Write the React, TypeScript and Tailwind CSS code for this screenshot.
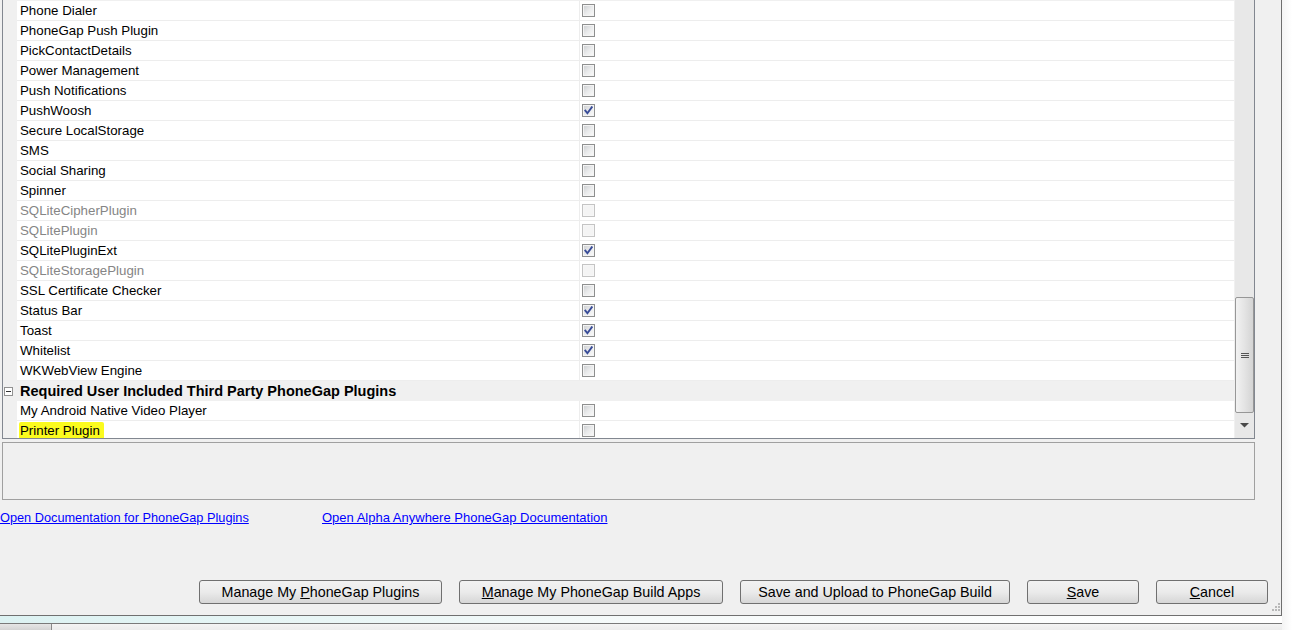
import React from "react";

type Row = { name: string; state: 0 | 1 | 2 };

const rows: Row[] = [
  { name: "Phone Dialer", state: 0 },
  { name: "PhoneGap Push Plugin", state: 0 },
  { name: "PickContactDetails", state: 0 },
  { name: "Power Management", state: 0 },
  { name: "Push Notifications", state: 0 },
  { name: "PushWoosh", state: 1 },
  { name: "Secure LocalStorage", state: 0 },
  { name: "SMS", state: 0 },
  { name: "Social Sharing", state: 0 },
  { name: "Spinner", state: 0 },
  { name: "SQLiteCipherPlugin", state: 2 },
  { name: "SQLitePlugin", state: 2 },
  { name: "SQLitePluginExt", state: 1 },
  { name: "SQLiteStoragePlugin", state: 2 },
  { name: "SSL Certificate Checker", state: 0 },
  { name: "Status Bar", state: 1 },
  { name: "Toast", state: 1 },
  { name: "Whitelist", state: 1 },
  { name: "WKWebView Engine", state: 0 },
];

function CheckBox({ state }: { state: 0 | 1 | 2 }) {
  if (state === 2) {
    return (
      <div className="w-[13px] h-[13px] border border-[#c4c4c4] bg-[#f7f7f7] p-[1px]">
        <div className="w-full h-full bg-[#f4f4f4]" />
      </div>
    );
  }
  return (
    <div className="w-[13px] h-[13px] border border-[#8e8f8f] bg-[#f4f4f4] p-[1px] relative">
      <div className="w-full h-full bg-gradient-to-br from-[#cfd1d3] via-[#e9eaeb] to-[#f8f8f8]" />
      {state === 1 && (
        <svg className="absolute left-[1px] top-[1px]" width="9" height="9" viewBox="0 0 9 9">
          <path d="M1.3 4.6 L3.4 7.2 L7.8 1.2" fill="none" stroke="#394c98" strokeWidth="1.9" strokeLinecap="square" />
        </svg>
      )}
    </div>
  );
}

function DataRow({ row }: { row: Row }) {
  return (
    <div className="flex h-[20px] shrink-0">
      <div className="w-[14px] bg-[#f0f0f0]" />
      <div className="flex flex-1 bg-white border-b border-[#ededed]">
        <div
          className={
            "w-[563px] border-r border-[#ededed] pl-[3px] leading-[19px] text-[13.3px] " +
            (row.state === 2 ? "text-[#858585]" : "text-black")
          }
        >
          {row.name}
        </div>
        <div className="pl-[2px] flex items-center">
          <CheckBox state={row.state} />
        </div>
      </div>
    </div>
  );
}

function Btn({ w, children }: { w: number; children: React.ReactNode }) {
  return (
    <div
      style={{ width: w }}
      className="shrink-0 h-[24px] rounded-[3px] border border-[#707070] bg-gradient-to-b from-[#f2f2f2] via-[#ebebeb] to-[#d6d6d6] flex items-center justify-center text-[14.3px] text-black leading-none"
    >
      {children}
    </div>
  );
}

export default function App() {
  return (
    <div className="w-[1292px] h-[630px] bg-[#f0f0f0] overflow-hidden font-['Liberation_Sans',Arial,sans-serif] flex flex-col">
      <div className="flex h-[615px]">
        <div className="w-[1281px] flex flex-col relative">
          {/* grid */}
          <div className="ml-[2px] w-[1253px] h-[439px] border-l border-r border-b border-[#828790] flex overflow-hidden">
            <div className="w-[1231px] flex flex-col pt-[1px] overflow-hidden">
              {rows.map((r) => (
                <DataRow key={r.name} row={r} />
              ))}
              <div className="flex h-[20px] bg-[#f0f0f0] items-center shrink-0">
                <div className="w-[14px] flex items-center">
                  <div className="ml-[1px] w-[9px] h-[9px] border border-[#919191] bg-white flex items-center justify-center">
                    <div className="w-[5px] h-[1px] bg-[#333]" />
                  </div>
                </div>
                <div className="pl-[3px] text-[14.5px] font-bold text-black leading-[19px]">
                  Required User Included Third Party PhoneGap Plugins
                </div>
              </div>
              <DataRow row={{ name: "My Android Native Video Player", state: 0 }} />
              <div className="flex h-[20px] shrink-0">
                <div className="w-[14px] bg-[#f0f0f0]" />
                <div className="flex flex-1 bg-white border-b border-[#ededed]">
                  <div className="w-[563px] border-r border-[#ededed] pl-[2px] text-[13.3px] text-black flex items-center">
                    <span className="bg-[#fbfb1e] pl-[1px] pr-[4px] leading-[18px] rounded-[2px]">Printer Plugin</span>
                  </div>
                  <div className="pl-[2px] flex items-center">
                    <CheckBox state={0} />
                  </div>
                </div>
              </div>
            </div>
            {/* scrollbar */}
            <div className="w-[20px] bg-[#e8e8e8] border-l border-[#f0f0f0] flex flex-col">
              <div className="h-[297px] shrink-0" />
              <div className="h-[116px] shrink-0 w-[19px] rounded-[2px] border border-[#979797] bg-gradient-to-r from-[#f2f2f2] via-[#e4e4e4] to-[#d4d4d4] flex flex-col items-center justify-center gap-[1px]">
                <div className="w-[8px] h-[1px] bg-[#555]" />
                <div className="w-[8px] h-[1px] bg-[#555]" />
                <div className="w-[8px] h-[1px] bg-[#555]" />
              </div>
              <div className="flex-1 flex items-center justify-center">
                <svg width="9" height="5" viewBox="0 0 9 5">
                  <path d="M0 0 H9 L4.5 4.5 Z" fill="#4a4a4a" />
                </svg>
              </div>
            </div>
          </div>
          {/* description box */}
          <div className="mt-[3px] ml-[2px] w-[1253px] h-[58px] border border-[#a0a0a0] bg-[#f0f0f0]" />
          {/* links */}
          <div className="mt-[10px] h-[16px] flex text-[12.75px] leading-[16px] text-[#0000ff] underline">
            <span className="w-[322px]">Open Documentation for PhoneGap Plugins</span>
            <span className="text-[13px]">Open Alpha Anywhere PhoneGap Documentation</span>
          </div>
          {/* buttons */}
          <div className="mt-[54px] ml-[199px] flex gap-[17px]">
            <Btn w={243}>
              <span>
                Manage My <u>P</u>honeGap Plugins
              </span>
            </Btn>
            <Btn w={264}>
              <span>
                <u>M</u>anage My PhoneGap Build Apps
              </span>
            </Btn>
            <Btn w={270}>
              <span>Save and Upload to PhoneGap Build</span>
            </Btn>
            <Btn w={112}>
              <span>
                <u>S</u>ave
              </span>
            </Btn>
            <Btn w={112}>
              <span>
                <u>C</u>ancel
              </span>
            </Btn>
          </div>
          {/* resize grip */}
          <svg className="absolute right-[1px] bottom-[2px]" width="10" height="10" viewBox="0 0 10 10">
            {[
              [8, 0],
              [8, 3],
              [5, 3],
              [8, 6],
              [5, 6],
              [2, 6],
            ].map(([x, y], i) => (
              <rect key={i} x={x} y={y} width="2" height="2" fill="#b8b8b8" />
            ))}
          </svg>
        </div>
        <div className="w-px bg-[#6e6e6e]" />
        <div className="flex-1 bg-gradient-to-r from-[#f4f4f4] to-white" />
      </div>
      {/* bottom frame */}
      <div className="flex h-[15px]">
        <div className="w-[1282px] flex flex-col">
          <div className="h-px bg-[#707070]" />
          <div className="h-[7px] bg-gradient-to-r from-[#dcf2f2] via-[#f6fafa] to-white" />
          <div className="h-px bg-[#7a7a7a]" />
          <div className="flex-1 flex">
            <div className="w-[51px] bg-gradient-to-b from-[#e6e6e6] to-[#d4d4d4]" />
            <div className="w-px bg-[#8a8a8a]" />
            <div className="flex-1 bg-gradient-to-b from-[#f4f4f4] to-[#ececec]" />
          </div>
        </div>
        <div className="flex-1 bg-gradient-to-r from-[#f4f4f4] to-white" />
      </div>
    </div>
  );
}
